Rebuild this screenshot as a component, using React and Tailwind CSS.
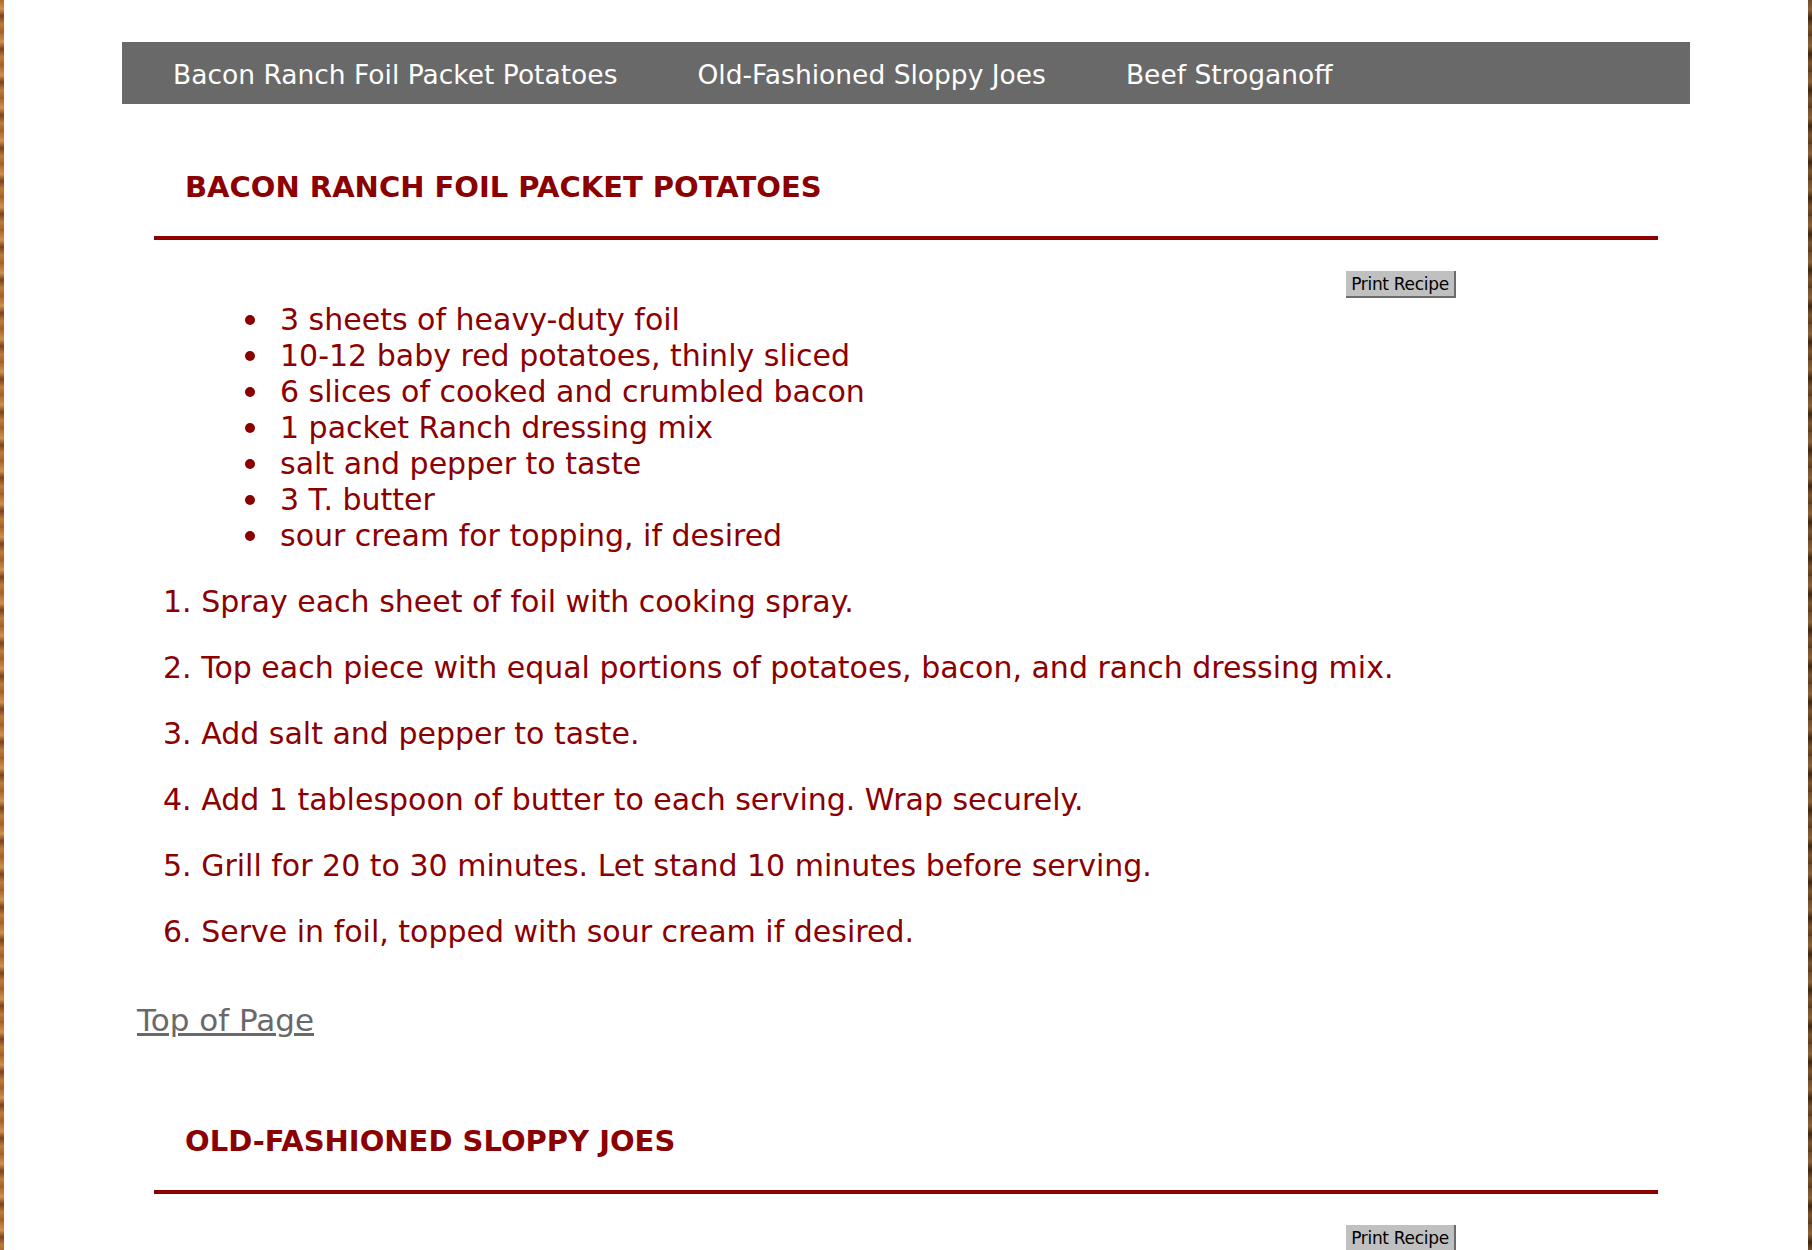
import React from 'react';

const recipes = [
  {
    id: 'bacon',
    nav: 'Bacon Ranch Foil Packet Potatoes',
    title: 'BACON RANCH FOIL PACKET POTATOES',
    ingredients: [
      '3 sheets of heavy-duty foil',
      '10-12 baby red potatoes, thinly sliced',
      '6 slices of cooked and crumbled bacon',
      '1 packet Ranch dressing mix',
      'salt and pepper to taste',
      '3 T. butter',
      'sour cream for topping, if desired',
    ],
    steps: [
      'Spray each sheet of foil with cooking spray.',
      'Top each piece with equal portions of potatoes, bacon, and ranch dressing mix.',
      'Add salt and pepper to taste.',
      'Add 1 tablespoon of butter to each serving. Wrap securely.',
      'Grill for 20 to 30 minutes. Let stand 10 minutes before serving.',
      'Serve in foil, topped with sour cream if desired.',
    ],
  },
  {
    id: 'sloppy',
    nav: 'Old-Fashioned Sloppy Joes',
    title: 'OLD-FASHIONED SLOPPY JOES',
    ingredients: [
      '1 lb. ground beef',
      '1/4 cup chopped onion',
      '1/4 cup chopped green pepper',
      '1/2 tsp. garlic powder',
      '1 tsp. prepared yellow mustard',
      '3/4 cup ketchup',
      '3 tsp. brown sugar',
      'salt and pepper to taste',
    ],
    steps: [
      'Brown the ground beef with the onion and green pepper; drain.',
      'Stir in garlic powder, mustard, ketchup and brown sugar.',
      'Simmer for 30 minutes. Season with salt and pepper.',
    ],
  },
  {
    id: 'stroganoff',
    nav: 'Beef Stroganoff',
    title: 'BEEF STROGANOFF',
    ingredients: [
      '1 lb. beef sirloin, cut in strips',
      '1 cup sliced mushrooms',
      '1 onion, chopped',
      '1 can beef broth',
      '1 cup sour cream',
      'egg noodles, cooked',
    ],
    steps: [
      'Brown the beef in a large skillet.',
      'Add mushrooms and onion; cook until tender.',
      'Stir in broth and simmer 10 minutes.',
      'Remove from heat, stir in sour cream and serve over noodles.',
    ],
  },
];

function Recipe({ recipe, first }) {
  return (
    <section id={recipe.id}>
      {/* Title with rule */}
      <div className={`mx-[32px] border-b-[4px] border-[#8b0000] pb-[32px] ${first ? 'mt-[66px]' : 'mt-[86px]'}`}>
        <h2 className="pl-[31px] text-[29px] font-bold leading-[34px] text-[#8b0000]">
          {recipe.title}
        </h2>
      </div>

      <div className="flex justify-end pr-[234px] mt-[31px]">
        <button className="h-[27px] w-[110px] bg-[#c0c0c0] border-r-2 border-b-2 border-[#6b6b6b] pt-[2px] text-[17px] leading-none tracking-[-0.3px] text-black">
          Print Recipe
        </button>
      </div>

      <ul className="mt-[4px] pl-[119px] text-[30px] leading-[36px] text-[#8b0000]">
        {recipe.ingredients.map((item) => (
          <li key={item} className="flex items-center">
            <span className="w-[39px] shrink-0">
              <span className="ml-[4px] block h-[10px] w-[10px] rounded-full bg-[#8b0000]" />
            </span>
            <span>{item}</span>
          </li>
        ))}
      </ul>

      <ol className="mt-[30px] list-decimal list-inside pl-[41px] text-[30px] leading-[36px] text-[#8b0000]">
        {recipe.steps.map((step, i) => (
          <li key={i} className="mb-[30px] last:mb-0">{step}</li>
        ))}
      </ol>

      <a href="#top" className="block mt-[52px] pl-[15px] text-[31px] leading-[36px] text-[#696969] underline">
        Top of Page
      </a>
    </section>
  );
}

export default function App() {
  return (
    <div className="flex min-h-screen font-['DejaVu_Sans',sans-serif]">
      <div className="w-[4px] shrink-0 bg-[repeating-linear-gradient(180deg,#b0682c_0px,#d0904c_9px,#7c431c_16px,#c07a38_24px,#a45e26_33px)]" />
      <div id="top" className="flex-1 bg-white pt-[42px] pb-[60px]">
        <div className="mx-auto w-[1568px]">
          {/* Nav */}
          <nav className="flex h-[62px] items-center gap-[80px] bg-[#696969] pl-[51px] pt-[4px]">
            {recipes.map((r) => (
              <a key={r.id} href={`#${r.id}`} className="text-[26.5px] text-white">
                {r.nav}
              </a>
            ))}
          </nav>

          {recipes.map((r, i) => (
            <Recipe key={r.id} recipe={r} first={i === 0} />
          ))}
        </div>
      </div>
      <div className="w-[4px] shrink-0 bg-[repeating-linear-gradient(180deg,#6e4a2a_0px,#8a6238_10px,#3e2612_18px,#7a5430_27px,#5a3a1e_36px)]" />
    </div>
  );
}
